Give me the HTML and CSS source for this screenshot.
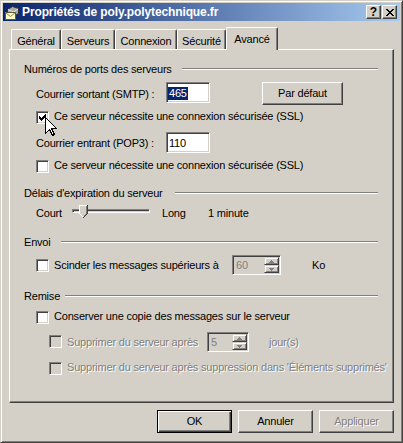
FILE: index.html
```html
<!DOCTYPE html>
<html lang="fr">
<head>
<meta charset="utf-8">
<title>Propriétés de poly.polytechnique.fr</title>
<link rel="stylesheet" href="styles.css">
</head>
<body>
<div class="window">
  <div class="titlebar">
    <svg class="app-icon" width="16" height="16" viewBox="0 0 16 16">
      <path d="M3.5 5.5 L8.5 2.5 L14.5 4.5 L14.5 9.5 L9.5 12.5 L3.5 9.5 Z" fill="#a8a8a8" stroke="#303030"/>
      <path d="M4 5.5 L9.5 8 L14 5" fill="none" stroke="#e8e8e8"/>
      <path d="M9.5 8.5 L9.5 12" fill="none" stroke="#606060"/>
      <rect x="1.5" y="8.5" width="10" height="7" fill="#ffffc8" stroke="#5a5a3a"/>
      <path d="M1.5 8.5 L6.5 12.5 L11.5 8.5" fill="none" stroke="#8a8a40"/>
    </svg>
    <span class="title">Propriétés de poly.polytechnique.fr</span>
    <div class="caption-buttons">
      <span class="cap-btn help">?</span>
      <span class="cap-btn close">
        <svg width="8" height="7" viewBox="0 0 8 7" shape-rendering="crispEdges"><path d="M0 0h2v1H0z M6 0h2v1H6z M1 1h2v1H1z M5 1h2v1H5z M2 2h4v1H2z M3 3h2v1H3z M2 4h4v1H2z M1 5h2v1H1z M5 5h2v1H5z M0 6h2v1H0z M6 6h2v1H6z" fill="#000"/></svg>
      </span>
    </div>
  </div>

  <div class="client">
    <div class="tabs">
      <div class="tab">Général</div>
      <div class="tab">Serveurs</div>
      <div class="tab">Connexion</div>
      <div class="tab">Sécurité</div>
      <div class="tab active">Avancé</div>
    </div>

    <div class="panel">
      <div class="group g1"><span class="legend">Numéros de ports des serveurs</span><span class="rule"></span></div>

      <div class="row field-row smtp">
        <span class="field-label">Courrier sortant (SMTP) :</span>
        <span class="edit"><span class="selection">465</span></span>
        <span class="btn btn-default-port">Par défaut</span>
      </div>

      <div class="row check-row check1">
        <span class="cb">
          <svg width="7" height="7" viewBox="0 0 7 7" shape-rendering="crispEdges"><path d="M0 2h1v3H0z M1 3h1v3H1z M2 4h1v3H2z M3 3h1v3H3z M4 2h1v3H4z M5 1h1v3H5z M6 0h1v3H6z" fill="#000"/></svg>
        </span>
        <span class="cb-label">Ce serveur nécessite une connexion sécurisée (SSL)</span>
      </div>

      <div class="row field-row pop3">
        <span class="field-label">Courrier entrant (POP3) :</span>
        <span class="edit"><span class="value">110</span></span>
      </div>

      <div class="row check-row check2">
        <span class="cb"></span>
        <span class="cb-label">Ce serveur nécessite une connexion sécurisée (SSL)</span>
      </div>

      <div class="group g2"><span class="legend">Délais d'expiration du serveur</span><span class="rule"></span></div>

      <div class="row slider-row">
        <span class="slider-min">Court</span>
        <span class="slider">
          <span class="track"></span>
          <svg class="thumb" width="9" height="13" viewBox="0 0 9 13" shape-rendering="crispEdges">
            <path d="M0 0h9v9L4.5 13.5 0 9z" fill="#d4d0c8"/>
            <path d="M0 0h8v1H1v8H0z M1 9h1v1H1z M2 10h1v1H2z M3 11h1v1H3z" fill="#fff"/>
            <path d="M7 1h1v8H7z M6 9h1v1H6z M5 10h1v1H5z" fill="#808080"/>
            <path d="M8 0h1v9H8z M7 9h1v1H7z M6 10h1v1H6z M5 11h1v1H5z M4 12h1v1H4z" fill="#404040"/>
          </svg>
        </span>
        <span class="slider-max">Long</span>
        <span class="slider-value">1 minute</span>
      </div>

      <div class="group g3"><span class="legend">Envoi</span><span class="rule"></span></div>

      <div class="row check-row split-row">
        <span class="cb"></span>
        <span class="cb-label">Scinder les messages supérieurs à</span>
        <span class="spin spin-size">
          <span class="spin-value">60</span>
          <span class="spin-arrows">
            <span class="spin-btn"><svg width="5" height="3" viewBox="0 0 5 3" shape-rendering="crispEdges"><path d="M2 0h1v1H2z M1 1h3v1H1z M0 2h5v1H0z" fill="#808080"/></svg></span>
            <span class="spin-btn"><svg width="5" height="3" viewBox="0 0 5 3" shape-rendering="crispEdges"><path d="M0 0h5v1H0z M1 1h3v1H1z M2 2h1v1H2z" fill="#808080"/></svg></span>
          </span>
        </span>
        <span class="unit unit-ko">Ko</span>
      </div>

      <div class="group g4"><span class="legend">Remise</span><span class="rule"></span></div>

      <div class="row check-row keep-row">
        <span class="cb"></span>
        <span class="cb-label">Conserver une copie des messages sur le serveur</span>
      </div>

      <div class="row check-row sub-row days-row disabled">
        <span class="cb"></span>
        <span class="cb-label">Supprimer du serveur après</span>
        <span class="spin spin-days">
          <span class="spin-value">5</span>
          <span class="spin-arrows">
            <span class="spin-btn"><svg width="5" height="3" viewBox="0 0 5 3" shape-rendering="crispEdges"><path d="M2 0h1v1H2z M1 1h3v1H1z M0 2h5v1H0z" fill="#808080"/></svg></span>
            <span class="spin-btn"><svg width="5" height="3" viewBox="0 0 5 3" shape-rendering="crispEdges"><path d="M0 0h5v1H0z M1 1h3v1H1z M2 2h1v1H2z" fill="#808080"/></svg></span>
          </span>
        </span>
        <span class="unit unit-days">jour(s)</span>
      </div>

      <div class="row check-row sub-row deleted-row disabled">
        <span class="cb"></span>
        <span class="cb-label">Supprimer du serveur après suppression dans 'Éléments supprimés'</span>
      </div>
    </div>

    <div class="dialog-buttons">
      <span class="btn btn-ok">OK</span>
      <span class="btn">Annuler</span>
      <span class="btn btn-disabled">Appliquer</span>
    </div>
  </div>

  <svg class="cursor" width="13" height="20" viewBox="0 0 13 20" shape-rendering="crispEdges">
    <path d="M0.5 0.5 L0.5 16.5 L4.5 12.5 L7.5 18.5 L9.5 17.5 L6.5 11.5 L11.5 11.5 Z" fill="#fff" stroke="#000"/>
  </svg>
</div>
</body>
</html>
```

FILE: styles.css
```css
* { box-sizing: border-box; }

html, body {
  margin: 0;
  padding: 0;
  background: #d4d0c8;
}

body {
  font-family: "Liberation Sans", Arial, sans-serif;
  font-size: 11px;
  line-height: 13px;
  letter-spacing: -0.2px;
  color: #000;
}

.window {
  position: relative;
  width: 403px;
  height: 443px;
  background: #d4d0c8;
  border: 1px solid;
  border-color: #d4d0c8 #404040 #404040 #d4d0c8;
  box-shadow: inset 1px 1px #fff, inset -1px -1px #808080;
  padding: 2px;
}

/* Title bar */
.titlebar {
  height: 18px;
  display: flex;
  align-items: center;
  padding: 0 3px 0 1px;
  background: linear-gradient(to right, #0a246a, #a6caf0);
}

.app-icon {
  flex: 0 0 16px;
  display: block;
}

.title {
  margin-left: 2px;
  color: #fff;
  font-weight: bold;
  font-size: 12px;
  letter-spacing: -0.12px;
  white-space: nowrap;
}

.caption-buttons {
  margin-left: auto;
  display: flex;
  gap: 1px;
}

.cap-btn {
  width: 15px;
  height: 14px;
  display: flex;
  align-items: center;
  justify-content: center;
  background: #d4d0c8;
  border: 1px solid;
  border-color: #fff #404040 #404040 #fff;
  box-shadow: inset -1px -1px #808080;
  font-weight: bold;
  font-size: 12px;
  letter-spacing: 0;
  color: #000;
}

.cap-btn svg { display: block; }

/* Client area */
.client {
  padding: 0 6px;
}

.tabs {
  margin-top: 6px;
  height: 22px;
  display: flex;
  align-items: flex-end;
  padding-left: 2px;
}

.tab {
  height: 20px;
  border: 1px solid;
  border-bottom: none;
  border-color: #fff #404040 #404040 #fff;
  border-radius: 2px 2px 0 0;
  box-shadow: inset -1px 0 #808080;
  padding-top: 5px;
  text-align: center;
  white-space: nowrap;
  background: #d4d0c8;
}

.tab:nth-child(1) { width: 50px; }
.tab:nth-child(2) { width: 54px; }
.tab:nth-child(3) { width: 62px; }
.tab:nth-child(4) { width: 49px; }
.tab:nth-child(5) { width: 52px; }

.tab.active {
  height: 23px;
  margin-bottom: -1px;
  position: relative;
  z-index: 1;
}

.panel {
  height: 354px;
  border: 1px solid;
  border-color: #fff #404040 #404040 #fff;
  box-shadow: inset -1px -1px #808080;
  padding: 13px 15px 0 14px;
}

/* Group headers */
.group {
  display: flex;
  align-items: flex-start;
  height: 13px;
}

.legend { white-space: nowrap; flex: 0 0 auto; }
.g1 .legend { width: 158px; }
.g2 .legend { width: 151px; }
.g3 .legend { width: 37px; }
.g4 .legend { width: 41px; }

.rule {
  flex: 1;
  height: 2px;
  margin-top: 5px;
  border-top: 1px solid #808080;
  border-bottom: 1px solid #fff;
}

.g2 { margin-top: 14px; }
.g3 { margin-top: 16px; }
.g4 { margin-top: 15px; }

/* Rows */
.row {
  display: flex;
  align-items: flex-start;
  margin-left: 12px;
  white-space: nowrap;
}

.sub-row { margin-left: 25px; }

.smtp { margin-top: 6px; }
.check1 { margin-top: 5px; }
.pop3 { margin-top: 8px; }
.check2 { margin-top: 6px; }
.slider-row { margin-top: 7px; }
.split-row { margin-top: 6px; }
.keep-row { margin-top: 7px; }
.days-row { margin-top: 8px; }
.deleted-row { margin-top: 9px; }

.field-label {
  width: 130px;
  margin-top: 6px;
}

.pop3 .field-label { margin-top: 5px; }

.edit {
  width: 44px;
  height: 21px;
  background: #fff;
  border: 1px solid;
  border-color: #808080 #fff #fff #808080;
  box-shadow: inset 1px 1px #404040, inset -1px -1px #d4d0c8;
  padding: 4px 0 0 1px;
}

.selection {
  display: inline-block;
  background: #0a246a;
  color: #fff;
  padding: 0 1px;
}

.value { padding-left: 1px; }

/* Checkboxes */
.cb {
  flex: 0 0 13px;
  width: 13px;
  height: 13px;
  margin-top: 1px;
  background: #fff;
  border: 1px solid;
  border-color: #808080 #fff #fff #808080;
  box-shadow: inset 1px 1px #404040, inset -1px -1px #d4d0c8;
  padding: 2px;
}

.cb svg { display: block; }

.cb-label { margin-left: 5px; }

.split-row .cb { margin-top: 4px; }
.split-row .cb-label { margin-top: 4px; width: 178px; }
.days-row .cb { margin-top: 3px; }
.days-row .cb-label { margin-top: 4px; width: 140px; }

.disabled .cb { background: #d4d0c8; }
.disabled .cb-label,
.disabled .unit {
  color: #808080;
  text-shadow: 1px 1px #fff;
}

/* Spin boxes */
.spin {
  display: flex;
  height: 20px;
  background: #d4d0c8;
  border: 1px solid;
  border-color: #808080 #fff #fff #808080;
  box-shadow: inset 1px 1px #404040, inset -1px -1px #d4d0c8;
  padding: 1px;
}

.spin-size { width: 49px; }
.spin-days { width: 42px; }

.spin-value {
  flex: 1;
  color: #808080;
  padding: 2px 0 0 2px;
}

.spin-arrows {
  width: 15px;
  display: flex;
  flex-direction: column;
}

.spin-btn {
  flex: 1;
  display: flex;
  align-items: center;
  justify-content: center;
  border: 1px solid;
  border-color: #d4d0c8 #404040 #404040 #d4d0c8;
  box-shadow: inset 1px 1px #fff, inset -1px -1px #808080;
}

.spin-btn svg { display: block; }

.unit { margin-top: 4px; }
.unit-ko { margin-left: 31px; }
.unit-days { margin-left: 20px; }

/* Slider */
.slider-min { width: 36px; }

.slider {
  position: relative;
  width: 78px;
  height: 13px;
  margin-top: -2px;
}

.track {
  position: absolute;
  left: 0;
  right: 0;
  top: 4px;
  height: 4px;
  border: 1px solid;
  border-color: #808080 #fff #fff #808080;
  box-shadow: inset 1px 1px #404040, inset -1px -1px #d4d0c8;
}

.thumb {
  position: absolute;
  left: 7px;
  top: 0;
  display: block;
}

.slider-max { margin-left: 12px; width: 46px; }

/* Buttons */
.btn {
  display: flex;
  align-items: center;
  justify-content: center;
  width: 75px;
  height: 23px;
  background: #d4d0c8;
  border: 1px solid;
  border-color: #fff #404040 #404040 #fff;
  box-shadow: inset -1px -1px #808080;
}

.btn-default-port {
  width: 81px;
  margin-left: 52px;
}

.btn-ok {
  border-color: #000;
  box-shadow: inset 1px 1px #fff, inset -1px -1px #404040, inset -2px -2px #808080;
}

.btn-disabled {
  color: #808080;
  text-shadow: 1px 1px #fff;
}

.dialog-buttons {
  display: flex;
  justify-content: flex-end;
  gap: 6px;
  margin-top: 7px;
}

/* Mouse pointer overlay */
.cursor {
  position: absolute;
  left: 44px;
  top: 116px;
  display: block;
}
```
